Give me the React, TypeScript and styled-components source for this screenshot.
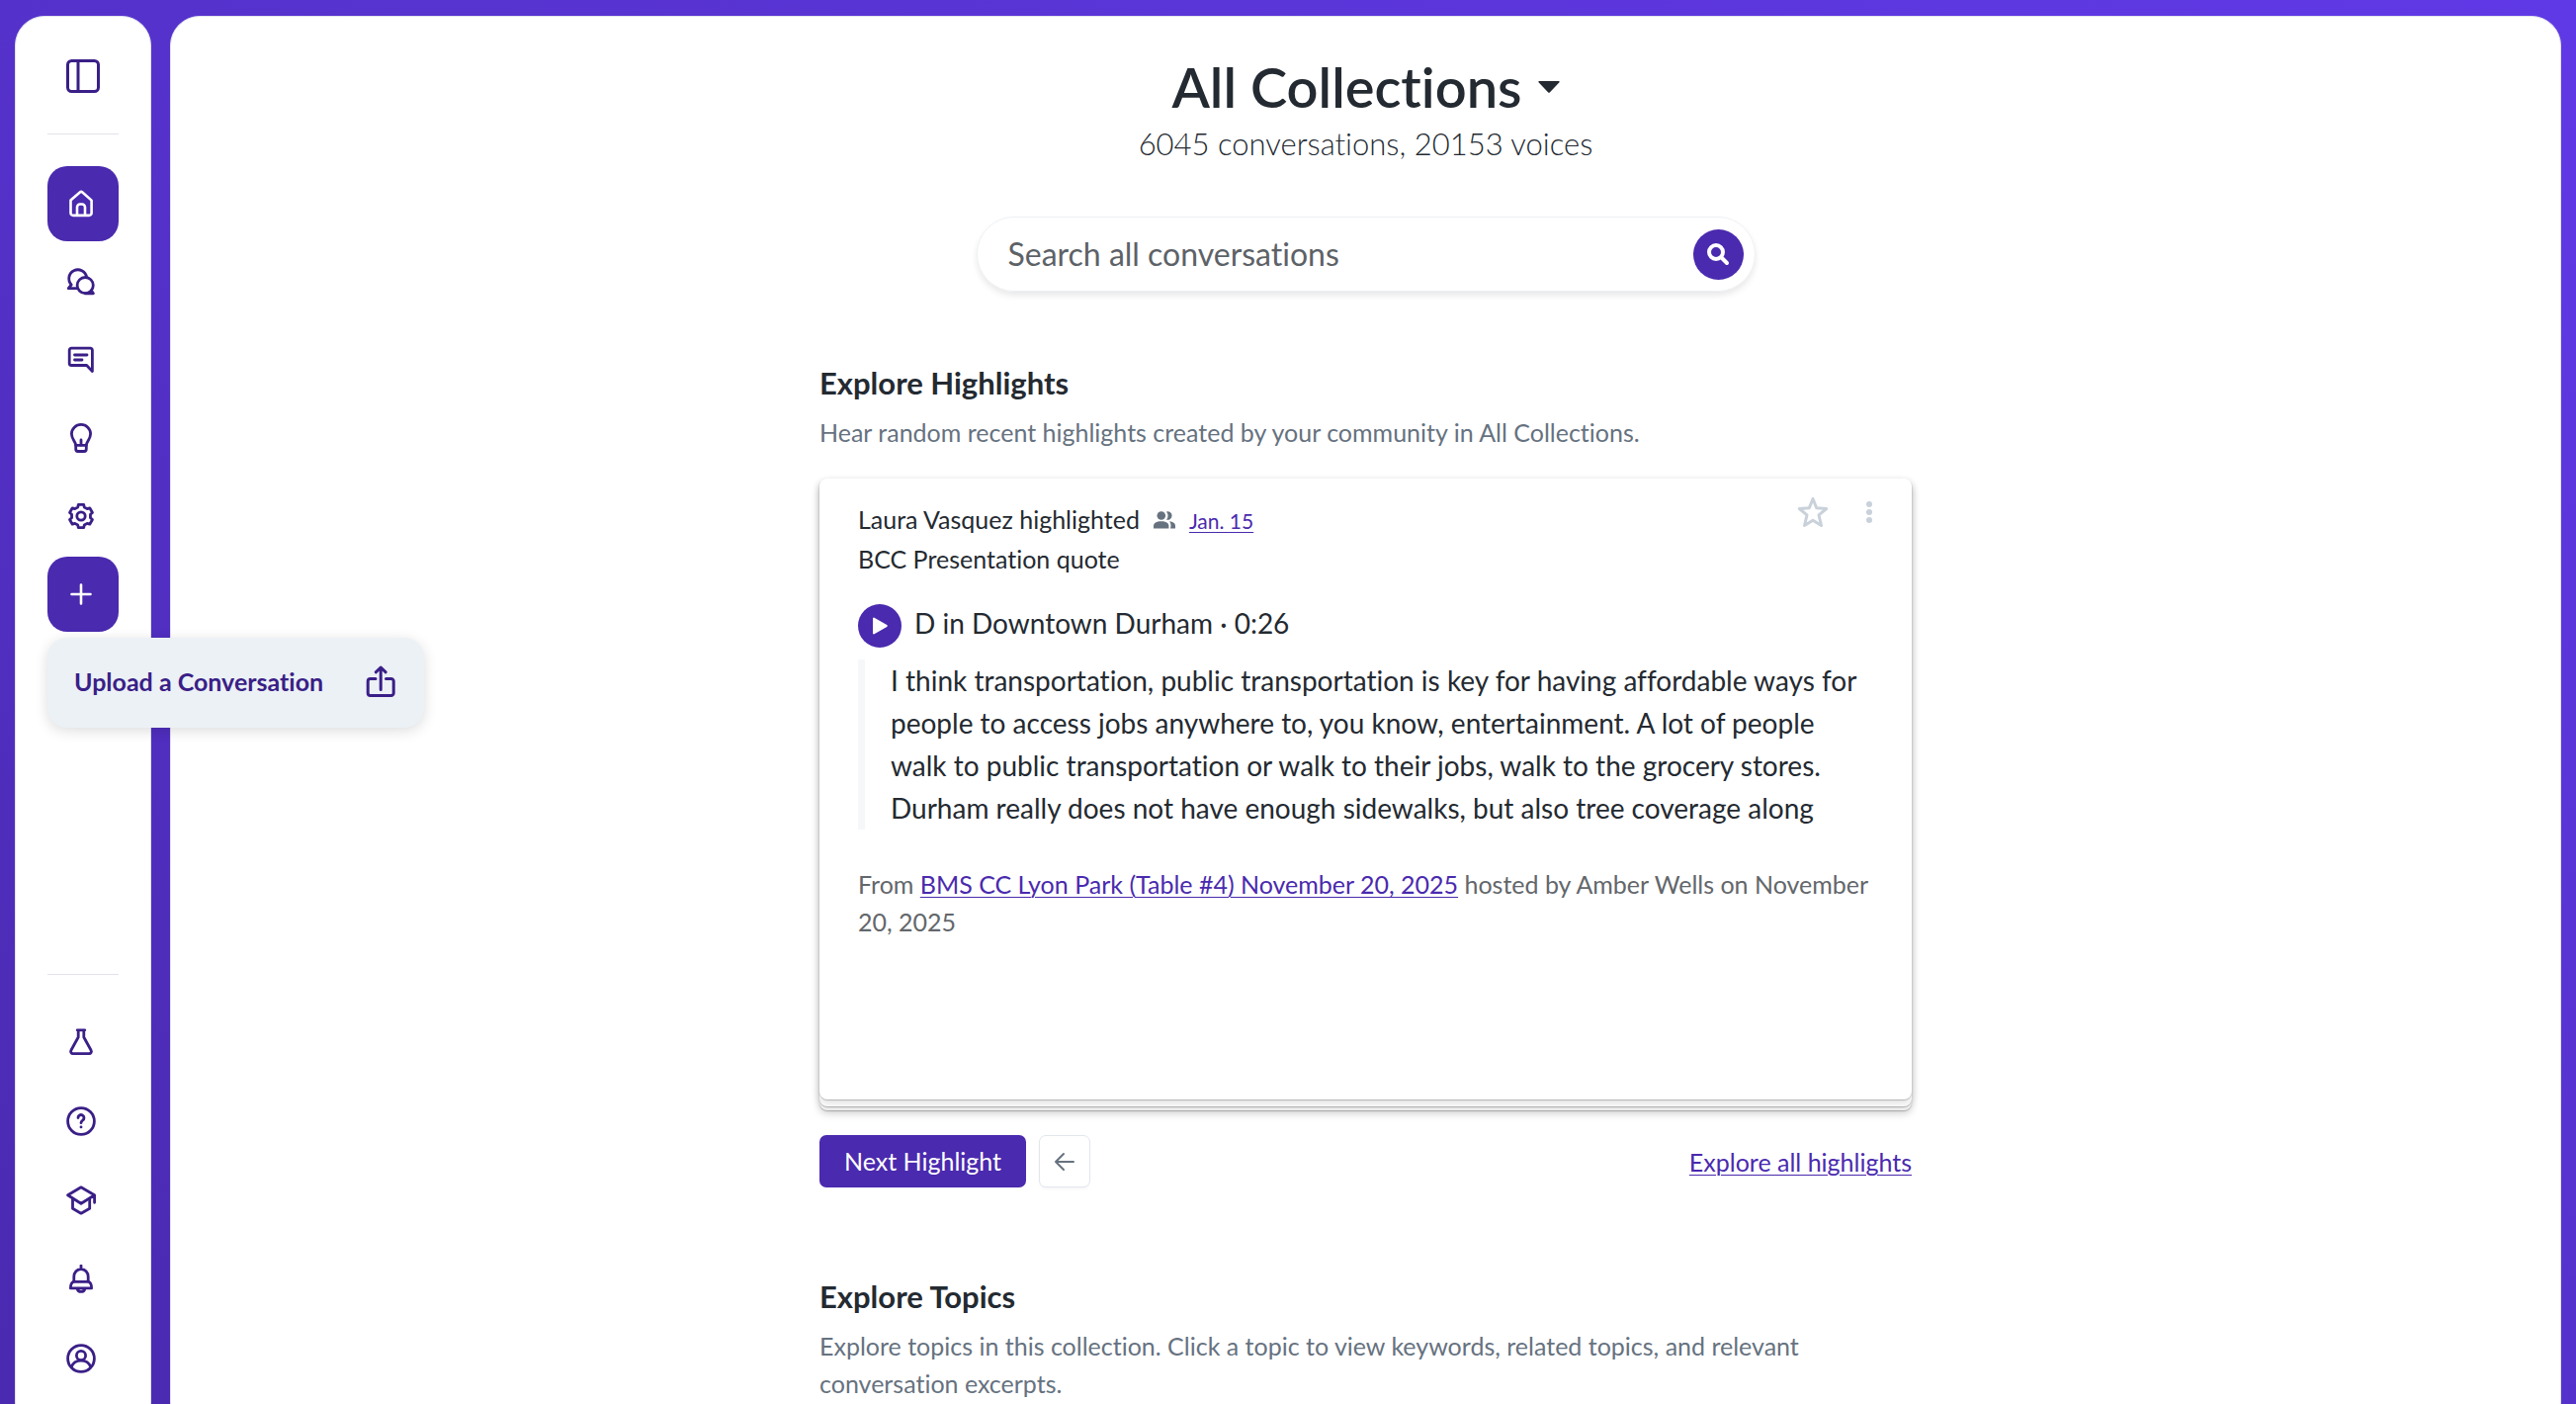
import React, { ReactNode } from "react";
import styled, { createGlobalStyle, css } from "styled-components";

const color = {
  brand: "#4a2aae",
  ink: "#3a1f87",
  text: "#242a31",
  muted: "#66727f",
  soft: "#63676b",
};

const Global = createGlobalStyle`
  *, *::before, *::after { box-sizing: border-box; }
  body {
    margin: 0;
    font-family: Lato, "Open Sans", sans-serif;
    font-size: 25px;
    line-height: 38px;
    font-variant-ligatures: none;
    color: ${color.text};
  }
  button, input { font: inherit; color: inherit; }
  h1, h2, p, blockquote { margin: 0; }
`;

const Shell = styled.div`
  display: flex;
  gap: 19px;
  height: 100vh;
  padding: 16px 15px 0;
  overflow: hidden;
  background: linear-gradient(to top right, #4a2ab0, #6039e6);
`;

const panel = css`
  height: calc(100vh + 12px);
  border: 1px solid #dfe3ec;
  border-radius: 30px;
  background: #fff;
`;

const Sidebar = styled.nav`
  ${panel}
  flex: none;
  display: flex;
  flex-direction: column;
  width: 138px;
  padding: 24px 32px 35px;
`;

const Main = styled.main`
  ${panel}
  flex: 1;
  min-width: 0;
  display: flex;
  flex-direction: column;
  align-items: center;
  padding: 39px 32px 0;
  overflow: hidden;
`;

const Rule = styled.hr`
  width: 100%;
  height: 1px;
  margin: 0;
  border: 0;
  background: #e2e3ea;
`;

const NavGroup = styled.div<{ $gap: number; $bottom?: boolean }>`
  display: flex;
  flex-direction: column;
  gap: ${(p) => p.$gap}px;
  padding-top: ${(p) => (p.$bottom ? 30 : 32)}px;
`;

const Spacer = styled.div`
  flex: 1;
`;

const NavButton = styled.button<{ $filled?: boolean }>`
  display: flex;
  align-items: center;
  justify-content: center;
  width: 72px;
  height: 76px;
  padding: 0 4px 0 0;
  border: 0;
  border-radius: 20px;
  background: ${(p) => (p.$filled ? color.brand : "transparent")};
  color: ${(p) => (p.$filled ? "#fff" : color.ink)};
  cursor: pointer;
`;

const ToggleButton = styled(NavButton)`
  height: 72px;
  padding: 0;
  margin-bottom: 22px;
`;

const MenuAnchor = styled.div`
  position: relative;
`;

const UploadItem = styled.button`
  position: absolute;
  top: 82px;
  left: 0;
  z-index: 2;
  display: flex;
  align-items: center;
  justify-content: space-between;
  width: 381px;
  height: 91px;
  padding: 0 27px 4px;
  border: 0;
  border-radius: 20px;
  background: #ecf1f5;
  box-shadow: 0 3px 14px rgba(0, 0, 0, 0.14);
  color: ${color.ink};
  font-weight: 700;
  white-space: nowrap;
  cursor: pointer;
`;

const TitleRow = styled.h1`
  font-size: 56px;
  font-weight: 600;
  line-height: 64px;
`;

const TitleButton = styled.button`
  display: flex;
  align-items: center;
  gap: 16px;
  padding: 0;
  border: 0;
  background: none;
  cursor: pointer;
`;

const Subtitle = styled.p`
  margin-top: 5px;
  font-size: 31px;
  font-weight: 300;
  line-height: 40px;
`;

const SearchBar = styled.form`
  display: flex;
  align-items: center;
  width: 100%;
  max-width: 788px;
  height: 76px;
  margin-top: 54px;
  padding: 0 11px 0 31px;
  border: 1px solid #edf0f3;
  border-radius: 38px;
  box-shadow: 0 4px 6px rgba(0, 0, 0, 0.09);
`;

const SearchInput = styled.input`
  flex: 1;
  min-width: 0;
  padding: 0;
  border: 0;
  outline: 0;
  background: none;
  font-size: 32px;
  line-height: 40px;
  &::placeholder {
    color: #5d6267;
    opacity: 1;
  }
`;

const RoundButton = styled.button<{ $size: number }>`
  flex: none;
  display: flex;
  align-items: center;
  justify-content: center;
  width: ${(p) => p.$size}px;
  height: ${(p) => p.$size}px;
  padding: 0;
  border: 0;
  border-radius: 50%;
  background: ${color.brand};
  color: #fff;
  cursor: pointer;
`;

const Section = styled.section<{ $top: number }>`
  width: 100%;
  max-width: 1105px;
  margin-top: ${(p) => p.$top}px;
`;

const Heading = styled.h2`
  font-size: 31px;
  font-weight: 700;
  line-height: 40px;
`;

const Lead = styled.p`
  margin-top: 11px;
  color: ${color.muted};
`;

const layer = css`
  border-radius: 8px;
  background: #fff;
  box-shadow: 0 1px 1px rgba(0, 0, 0, 0.22), 0 4px 8px rgba(0, 0, 0, 0.12);
`;

const Deck = styled.div`
  ${layer}
  margin-top: 28px;
  padding-bottom: 4px;
`;

const DeckLayer = styled.div`
  ${layer}
  padding-bottom: 7px;
`;

const Card = styled.article`
  ${layer}
  min-height: 628px;
  padding: 18px 31px 28px 39px;
`;

const CardHeader = styled.header`
  display: flex;
  align-items: flex-start;
  justify-content: space-between;
`;

const Byline = styled.div`
  padding-top: 4px;
`;

const BylineRow = styled.div`
  display: flex;
  align-items: baseline;
  gap: 14px;
`;

const CardActions = styled.div`
  display: flex;
  align-items: center;
  gap: 29px;
`;

const IconButton = styled.button`
  display: flex;
  padding: 0;
  border: 0;
  background: none;
  color: #c9d1da;
  cursor: pointer;
`;

const Link = styled.a<{ $small?: boolean }>`
  color: ${color.brand};
  font-size: ${(p) => (p.$small ? 21 : 25)}px;
  text-decoration: underline;
  text-decoration-thickness: 1px;
  text-underline-offset: 3px;
`;

const Player = styled.div`
  display: flex;
  align-items: flex-start;
  gap: 13px;
  margin-top: 27px;
  font-size: 28px;
`;

const Quote = styled.blockquote`
  margin-top: 12px;
  padding: 0 10px 0 26px;
  border-left: 7px solid #f6f7f9;
  font-size: 28px;
  line-height: 43px;
`;

const Source = styled.p`
  margin-top: 36px;
  color: ${color.soft};
`;

const Controls = styled.div`
  display: flex;
  align-items: center;
  gap: 13px;
  margin-top: 25px;
`;

const PrimaryButton = styled.button`
  height: 53px;
  padding: 0 25px 2px;
  border: 0;
  border-radius: 7px;
  background: ${color.brand};
  color: #fff;
  cursor: pointer;
`;

const BackButton = styled.button`
  display: flex;
  align-items: center;
  justify-content: center;
  width: 52px;
  height: 53px;
  padding: 0;
  border: 1px solid #e2e6ed;
  border-radius: 7px;
  background: #fff;
  box-shadow: 0 2px 2px rgba(0, 0, 0, 0.03);
  color: ${color.muted};
  cursor: pointer;
`;

const Glyph = ({ size = 30, stroke = 3, children }: { size?: number; stroke?: number; children: ReactNode }) => (
  <svg
    width={size}
    height={size}
    viewBox={`0 0 ${size} ${size}`}
    fill="none"
    stroke="currentColor"
    strokeWidth={stroke}
    strokeLinecap="round"
    strokeLinejoin="round"
    aria-hidden="true"
  >
    {children}
  </svg>
);

const gearPoints = Array.from({ length: 6 }, (_, tooth) =>
  [
    [9.6, -20],
    [12, -13],
    [12, 13],
    [9.6, 20],
  ].map(([radius, offset]) => {
    const angle = ((tooth * 60 - 90 + offset) * Math.PI) / 180;
    return `${(15 + radius * Math.cos(angle)).toFixed(2)},${(15 + radius * Math.sin(angle)).toFixed(2)}`;
  }).join(" "),
).join(" ");

const icons: Record<string, ReactNode> = {
  home: (
    <>
      <path d="M4.5 11.6 13.8 3.4a2 2 0 0 1 2.6 0l9.2 8.2v12.8a2.5 2.5 0 0 1-2.5 2.5H7a2.5 2.5 0 0 1-2.5-2.5z" />
      <path d="M11 26.5v-8a3 3 0 0 1 3-3h2a3 3 0 0 1 3 3v8" />
    </>
  ),
  chats: (
    <>
      <path d="M20.6 10.2A9 9 0 1 0 5.2 18l-3 3.7H11" />
      <circle cx="19.2" cy="18.6" r="8.1" />
      <path d="M19.2 26.8h8.2l-2-3" />
    </>
  ),
  message: (
    <>
      <path d="M26.4 26.6V5.2a2 2 0 0 0-2-2H5.2a2 2 0 0 0-2 2v13.3a2 2 0 0 0 2 2h15.5z" />
      <path d="M8.5 10H21M8.5 15H16" />
    </>
  ),
  bulb: (
    <>
      <path d="M9.7 22.3C9.3 18 5.4 16.2 5.4 10.8a9.6 9.4 0 0 1 19.2 0c0 5.4-3.9 7.2-4.3 11.5z" />
      <path d="M9.7 22.3v4a2.200 2.200 0 0 0 2.200 2.200h6.200a2.200 2.200 0 0 0 2.200-2.200v-4M15 17v5" />
    </>
  ),
  gear: (
    <>
      <polygon points={gearPoints} />
      <circle cx="15" cy="15" r="4.2" />
    </>
  ),
  plus: <path d="M15 5.5v19M5.5 15h19" />,
  flask: <path d="M11.2 2.8h7.6M12.2 3v7L4.9 23.2a2.3 2.3 0 0 0 2 3.5h16.200a2.3 2.3 0 0 0 2-3.5L17.8 10V3" />,
  help: (
    <>
      <circle cx="15" cy="15" r="13.4" />
      <path d="M12 11.600a3 3 0 1 1 4.600 2.500c-1.200.8-1.600 1.300-1.600 2.600M15 20.800v.1" />
    </>
  ),
  hat: (
    <>
      <path d="M15 1.800 1.600 9.800 15 18.300l13.600-8.500zM28.600 9.800v7.500" />
      <path d="M6.500 13.200v10l8.500 5 8.700-5v-10" />
    </>
  ),
  bell: (
    <>
      <path d="M15 1v3M7.800 17v-4.800a7.200 7.700 0 0 1 14.400 0V17" />
      <path d="M7.500 17.300h15c2 .8 3.100 3 3.100 6.600H4.400c0-3.600 1.100-5.800 3.100-6.600zM11.200 24.600a3.900 3.700 0 0 0 7.600 0" />
    </>
  ),
  user: (
    <>
      <circle cx="15" cy="15" r="13.4" />
      <circle cx="15" cy="12" r="4.6" />
      <path d="M5.300 23.500c1.500-4 5-6.400 9.700-6.400s8.200 2.400 9.700 6.400" />
    </>
  ),
};

const primaryNav = [
  { icon: "home", label: "Home", filled: true },
  { icon: "chats", label: "Conversations" },
  { icon: "message", label: "Highlights" },
  { icon: "bulb", label: "Insights" },
  { icon: "gear", label: "Settings" },
];

const secondaryNav = [
  { icon: "flask", label: "Labs" },
  { icon: "help", label: "Help" },
  { icon: "hat", label: "Learn" },
  { icon: "bell", label: "Notifications" },
  { icon: "user", label: "Account" },
];

const NavItem = ({ icon, label, filled }: { icon: string; label: string; filled?: boolean }) => (
  <NavButton type="button" $filled={filled} aria-label={label}>
    <Glyph stroke={filled ? 2.6 : 2.8}>{icons[icon]}</Glyph>
  </NavButton>
);

export default function App() {
  return (
    <>
      <Global />
      <Shell>
        <Sidebar aria-label="Main">
          <ToggleButton type="button" aria-label="Toggle sidebar">
            <Glyph size={36}>
              <rect x="2.5" y="2.5" width="31" height="31" rx="4" />
              <path d="M13 2.5v31" />
            </Glyph>
          </ToggleButton>
          <Rule />
          <NavGroup $gap={3}>
            {primaryNav.map((item) => (
              <NavItem key={item.icon} {...item} />
            ))}
            <MenuAnchor>
              <NavItem icon="plus" label="Add" filled />
              <UploadItem type="button">
                Upload a Conversation
                <Glyph size={34}>
                  <path d="M12 14.5H6.700a2.500 2.500 0 0 0-2.500 2.500v12a2.500 2.500 0 0 0 2.500 2.500h21a2.500 2.500 0 0 0 2.500-2.500V17a2.500 2.500 0 0 0-2.500-2.500H22.500" />
                  <path d="M17.2 25.500V3M12.200 7.800l5-4.800 5 4.800" />
                </Glyph>
              </UploadItem>
            </MenuAnchor>
          </NavGroup>
          <Spacer />
          <Rule />
          <NavGroup $gap={4} $bottom>
            {secondaryNav.map((item) => (
              <NavItem key={item.icon} {...item} />
            ))}
          </NavGroup>
        </Sidebar>

        <Main>
          <TitleRow>
            <TitleButton type="button">
              All Collections
              <svg width="22" height="12" viewBox="0 0 22 12" fill="currentColor" aria-hidden="true">
                <path d="M1 0h20a.8.8 0 0 1 .5 1.300L12 11.300a1.400 1.400 0 0 1-2 0L.5 1.300A.8.8 0 0 1 1 0z" />
              </svg>
            </TitleButton>
          </TitleRow>
          <Subtitle>6045 conversations, 20153 voices</Subtitle>

          <SearchBar role="search">
            <SearchInput type="text" aria-label="Search all conversations" placeholder="Search all conversations" />
            <RoundButton type="button" $size={51} aria-label="Search">
              <Glyph size={24} stroke={4}>
                <circle cx="10" cy="10" r="7" />
                <path d="m15.5 15.5 5.5 5.5" />
              </Glyph>
            </RoundButton>
          </SearchBar>

          <Section $top={72}>
            <Heading>Explore Highlights</Heading>
            <Lead>Hear random recent highlights created by your community in All Collections.</Lead>
            <Deck>
              <DeckLayer>
                <Card>
                  <CardHeader>
                    <Byline>
                      <BylineRow>
                        <span>Laura Vasquez highlighted</span>
                        <svg width="22" height="18" viewBox="0 0 22 18" fill={color.muted} aria-hidden="true">
                          <circle cx="7.8" cy="4.5" r="4.3" />
                          <path d="M0 17.500v-2.500C0 11.800 3 10.200 7.700 10.200s7.700 1.600 7.700 4.800v2.500z" />
                          <path d="M13 .4a4.300 4.300 0 1 1 0 8.200 6.200 6.200 0 0 0 0-8.200zM17 17.500h5v-2.500c0-2.800-2.300-4.300-6-4.700 1 1.200 1.500 2.700 1.500 4.700z" />
                        </svg>
                        <Link $small href="#highlight">
                          Jan. 15
                        </Link>
                      </BylineRow>
                      <p>BCC Presentation quote</p>
                    </Byline>
                    <CardActions>
                      <IconButton type="button" aria-label="Favorite">
                        <svg
                          width="32"
                          height="32"
                          viewBox="0 0 32 32"
                          fill="none"
                          stroke="currentColor"
                          strokeWidth="3"
                          strokeLinejoin="round"
                          aria-hidden="true"
                        >
                          <path d="m16 2.500 3.700 9.300 10 .7-7.700 6.400 2.500 10.600L16 24.300l-8.500 5.200L10 18.900 2.300 12.500l10-.7z" />
                        </svg>
                      </IconButton>
                      <IconButton type="button" aria-label="More options">
                        <svg width="24" height="24" viewBox="0 0 24 24" fill="currentColor" aria-hidden="true">
                          <circle cx="12" cy="4" r="3" />
                          <circle cx="12" cy="12" r="3" />
                          <circle cx="12" cy="20" r="3" />
                        </svg>
                      </IconButton>
                    </CardActions>
                  </CardHeader>
                  <Player>
                    <RoundButton type="button" $size={44} aria-label="Play">
                      <svg width="16" height="18" viewBox="0 0 16 18" fill="currentColor" aria-hidden="true">
                        <path d="M1 1.600v14.800a1 1 0 0 0 1.500.9l12.700-7.400a1 1 0 0 0 0-1.800L2.500.7A1 1 0 0 0 1 1.600z" />
                      </svg>
                    </RoundButton>
                    <span>D in Downtown Durham · 0:26</span>
                  </Player>
                  <Quote>
                    I think transportation, public transportation is key for having affordable ways for people to access
                    jobs anywhere to, you know, entertainment. A lot of people walk to public transportation or walk to
                    their jobs, walk to the grocery stores. Durham really does not have enough sidewalks, but also tree
                    coverage along
                  </Quote>
                  <Source>
                    From <Link href="#conversation">BMS CC Lyon Park (Table #4) November 20, 2025</Link> hosted by Amber
                    Wells on November 20, 2025
                  </Source>
                </Card>
              </DeckLayer>
            </Deck>
            <Controls>
              <PrimaryButton type="button">Next Highlight</PrimaryButton>
              <BackButton type="button" aria-label="Previous highlight">
                <Glyph size={22} stroke={2}>
                  <path d="M20 11H2M10 3l-8 8 8 8" />
                </Glyph>
              </BackButton>
              <Spacer />
              <Link href="#highlights">Explore all highlights</Link>
            </Controls>
          </Section>

          <Section $top={90}>
            <Heading>Explore Topics</Heading>
            <Lead>
              Explore topics in this collection. Click a topic to view keywords, related topics, and relevant
              conversation excerpts.
            </Lead>
          </Section>
        </Main>
      </Shell>
    </>
  );
}
